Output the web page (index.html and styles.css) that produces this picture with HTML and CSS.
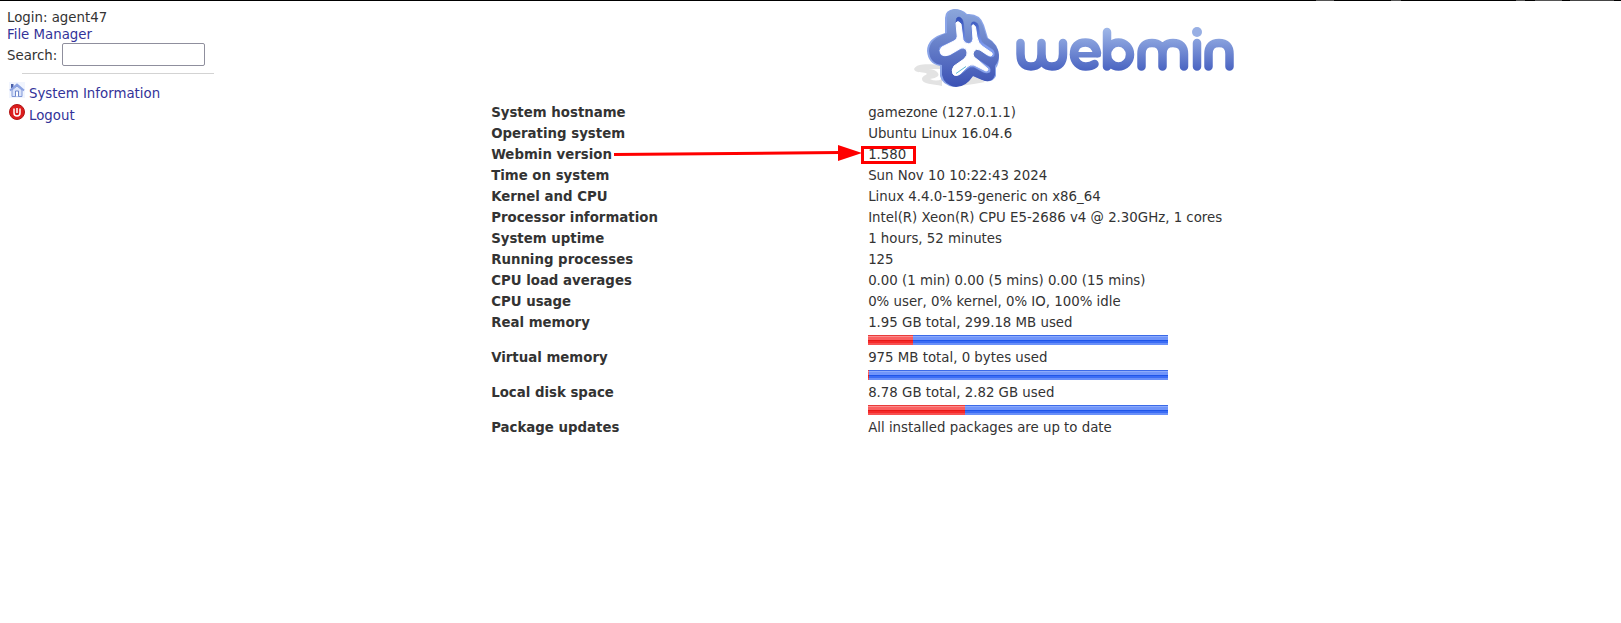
FILE: index.html
```html
<!DOCTYPE html>
<html lang="en">
<head>
<meta charset="utf-8">
<title>Webmin</title>
<link rel="stylesheet" href="styles.css">
</head>
<body>
<div class="topline"><i class="a"></i><i class="b"></i><i class="c"></i><i class="d"></i><i class="e"></i></div>
<div class="page">
  <aside class="side">
    <div class="login">Login: agent47</div>
    <a class="fm" href="#">File Manager</a>
    <form class="search"><label for="q">Search:</label><input id="q" type="text"></form>
    <hr class="rule">
    <nav class="links">
      <a href="#"><svg class="icon" viewBox="0 0 16 16"><rect width="16" height="16" fill="#f1f5fe"/><path d="M2 2h2.500v4H2z" fill="#4a5fa8"/><path d="M3 8L8 4l5 4v6.500H3z" fill="#dbe4fa" stroke="#8098d8"/><path d="M1 8.500L8 2.500l7 6" fill="none" stroke="#8ba2e2" stroke-width="1.800"/><path d="M6.500 14.500V9h3v5.500" fill="#fff" stroke="#6d86cb"/></svg><span>System Information</span></a>
      <a href="#"><svg class="icon" viewBox="0 0 16 16"><circle cx="8" cy="8" r="7.500" fill="#dc1c1c" stroke="#b01515"/><path d="M5 4.500v4.500a3 3 0 0 0 6 0V4.500M8 4v5" fill="none" stroke="#fff" stroke-width="1.500"/></svg><span>Logout</span></a>
    </nav>
  </aside>
  <main class="main">
    <svg class="logo" viewBox="0 0 350 100" role="img" aria-label="webmin">
      <defs>
        <linearGradient id="g" gradientUnits="userSpaceOnUse" x1="0" y1="8" x2="0" y2="88"><stop offset="0" stop-color="#8da8dc"/><stop offset="1" stop-color="#3a50b4"/></linearGradient>
        <linearGradient id="s" gradientUnits="userSpaceOnUse" x1="0" y1="17" x2="0" y2="74"><stop offset="0" stop-color="#3350b8"/><stop offset=".5" stop-color="#7f9cf0"/><stop offset="1" stop-color="#88a2ea"/></linearGradient>
        <linearGradient id="t" gradientUnits="userSpaceOnUse" x1="0" y1="28" x2="0" y2="71"><stop offset="0" stop-color="#a0b8e8"/><stop offset="1" stop-color="#4963c1"/></linearGradient>
      </defs>
      <path d="M14 69C17 63 28 64 42 65V86C33 84 22 84 22 79C22 75 29 75 26 73C22 72 15 73 14 69Z" fill="#e3e3e3"/>
      <path d="M28 69Q35 69 38 73T30 79Q36 82 42 79V69Z" fill="#fff"/>
      <path d="M60 84L73 75L85 82Q75 84 60 86Z" fill="#e3e3e3"/>
      <path d="M45 33V18Q45 10 54 9Q62 9 67 14Q80 13 84 25L88 38Q99 44 99 57Q99 64 96 68V76Q92 84 83 80L73 76Q64 87 54 87Q42 85 40 76V66Q28 64 27 51Q27 38 45 33Z" fill="#8aa4e8"/>
      <path d="M47 33V18Q47 10 55 9Q62 10 66 15Q79 14 83 26L87 38Q98 44 99 55Q99 61 95 66V75Q92 84 82 80L73 76Q66 87 56 87Q44 85 42 75V65Q30 64 29 51Q29 39 47 33Z" fill="url(#g)"/>
      <path d="M56 21Q56 17 59 17Q63 18 63.500 24L65 40Q66 43 69 43Q72 42 72 38L71 24Q72 21 75 22Q78 23 78.500 26L80 37Q81 42 84 44L93 50Q95 52 94 56Q92 58 88 56L80 50Q76 48 74 51Q72 54 74 57L80 61L89 67Q91 69 90 72Q87 74 83 72L74 67Q70 66 67 69L61 74Q57 77 53 74Q51 70 54 67L63 60Q68 56 67 52Q66 48 61 49L50 55Q44 57 41 55Q38 51 40 47L53 41Q57 39 57 33Z" fill="url(#s)" stroke="url(#s)" stroke-width=".5"/>
      <path d="M56 23Q58 20 61 24L63 40Q65 44 69 44Q73 43 73 39L72 26Q73 23 75.500 27L77 37Q78 43 82 46L92 53Q93 55 91 56Q89 56 86 54L80 50Q76 48 74 51Q72 54 74 57L79 61L88 69Q88 71 86 71L74 65Q70 64 67 67L60 74Q55 77 53 74Q51 70 54 66L64 59Q68 55 67 52Q66 47 61 48L50 54.500Q44 57 41 54Q38.500 50 42 47L54 41Q58 39 57 34Z" fill="#fff" stroke="#fff"/>
      <path d="M56 73.500L66 66.500" stroke="#36a9c4" fill="none" stroke-width=".8"/>
      <g fill="none" stroke="url(#t)" stroke-width="8.500" stroke-linecap="round" stroke-linejoin="round">
        <path d="M120.500 43V54Q120.500 66.500 131 66.500Q141.500 66.500 141.500 54V43V54Q141.500 66.500 152 66.500Q163 66.500 163 54V43"/>
        <path d="M174 54.500A11.500 12 0 0 0 186 66.500Q191 66.500 194.500 64"/>
        <path d="M174 54.500Q174 42.500 185.500 42.500Q195 42.500 197 53"/>
        <path d="M207 32V66.500M207 54.500A11.500 12 0 1 0 230 54.500A11.500 12 0 1 0 207 54.500"/>
        <path d="M241.500 66.500V54Q241.500 43 252 43Q262.500 43 262.500 54V66.500V54Q262.500 43 273 43Q284 43 284 54V66.500M297 43V66.500M308.500 66.500V54Q308.500 43 319 43Q329.500 43 329.500 54V66.500"/>
      </g>
      <path d="M176 52H201V55Q201 57.500 198 57.500H176Z" fill="url(#t)"/>
      <circle cx="297" cy="32" r="5" fill="#98afe4"/>
    </svg>
    <table class="info">
      <tr><th scope="row">System hostname</th><td>gamezone (127.0.1.1)</td></tr>
      <tr><th scope="row">Operating system</th><td>Ubuntu Linux 16.04.6</td></tr>
      <tr><th scope="row">Webmin version</th><td><span class="version">1.580<svg class="arrow" viewBox="0 0 248 18"><path d="M0 10.500L226 8.500" stroke="#f00" stroke-width="3"/><path d="M224 1L248 9L224 17Z" fill="#f00"/></svg></span></td></tr>
      <tr><th scope="row">Time on system</th><td>Sun Nov 10 10:22:43 2024</td></tr>
      <tr><th scope="row">Kernel and CPU</th><td>Linux 4.4.0-159-generic on x86_64</td></tr>
      <tr><th scope="row">Processor information</th><td>Intel(R) Xeon(R) CPU E5-2686 v4 @ 2.30GHz, 1 cores</td></tr>
      <tr><th scope="row">System uptime</th><td>1 hours, 52 minutes</td></tr>
      <tr><th scope="row">Running processes</th><td>125</td></tr>
      <tr><th scope="row">CPU load averages</th><td>0.00 (1 min) 0.00 (5 mins) 0.00 (15 mins)</td></tr>
      <tr><th scope="row">CPU usage</th><td>0% user, 0% kernel, 0% IO, 100% idle</td></tr>
      <tr><th scope="row">Real memory</th><td>1.95 GB total, 299.18 MB used<div class="bar"><div class="used" style="width:15%"></div></div></td></tr>
      <tr><th scope="row">Virtual memory</th><td>975 MB total, 0 bytes used<div class="bar"><div class="used" style="width:1px"></div></div></td></tr>
      <tr><th scope="row">Local disk space</th><td>8.78 GB total, 2.82 GB used<div class="bar"><div class="used" style="width:32.4%"></div></div></td></tr>
      <tr><th scope="row">Package updates</th><td>All installed packages are up to date</td></tr>
    </table>
  </main>
</div>
</body>
</html>
```
FILE: styles.css
```css
*, *::before { box-sizing: border-box; }
body { margin: 0; background: #fff; color: #333; font: 10pt/17px "DejaVu Sans", sans-serif; }
a { color: #339; text-decoration: none; }
.topline { height: 1px; background: #000; display: flex; justify-content: flex-end; }
.topline i { height: 1px; background: #555; }
.topline .a { width: 18px; margin-right: 57px; }
.topline .b { width: 10px; margin-right: 115px; }
.topline .c { width: 9px; margin-right: 10px; }
.topline .d { width: 27px; margin-right: 8px; }
.topline .e { width: 44px; margin-right: 7px; background: #444; }
.page { display: grid; grid-template-columns: 15% 1fr; }
.side { padding: 8px 7px; }
.login, .fm { display: block; }
.search { display: flex; align-items: center; gap: 5px; }
.search label { padding-top: 1px; }
.search input { width: 143px; height: 23px; border: 1px solid #8f8f9d; border-radius: 2px; padding: 0 4px; background: #fff; font: inherit; }
.rule { width: 192px; height: 1px; margin: 7px 0 8px 15px; border: 0; background: #d3d3d3; }
.links a { display: flex; height: 22px; gap: 4px; padding-left: 2px; align-items: flex-start; }
.links span { padding-top: 3px; }
.icon { width: 16px; height: 16px; }
.main { padding-left: 247px; }
.logo { display: block; width: 350px; height: 100px; margin: -1px 0 2px 410px; }
.info { border-collapse: collapse; width: 753px; table-layout: fixed; }
.info th, .info td { padding: 2px 1px; text-align: left; vertical-align: top; }
.info th { width: 377px; }
.version { position: relative; }
.version::before { content: ""; position: absolute; left: -7px; top: -1px; width: 55px; height: 18px; border: 3px solid #f00; }
.arrow { position: absolute; width: 248px; height: 18px; right: 44px; top: -3px; }
.bar { width: 300px; height: 10px; margin-top: 4px; background: linear-gradient(#3b6ae8 0 1px, #8dabfb 1px 2px, #7095fa 2px 5px, #1f55e8 5px 6px, #3a6cf5 6px 8px, #6a90f8 8px); }
.used { height: 10px; background: linear-gradient(#e83b3b 0 1px, #fb8d8d 1px 2px, #fa6060 2px 5px, #e81818 5px 6px, #f52a2a 6px 8px, #f85050 8px); }
```
